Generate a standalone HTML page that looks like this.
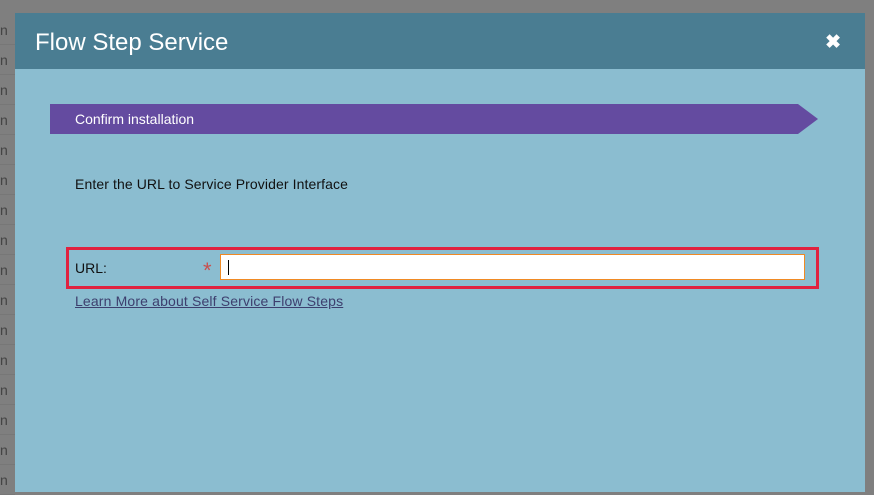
<!DOCTYPE html>
<html><head><meta charset="utf-8"><style>
*{margin:0;padding:0;box-sizing:border-box}
body{width:874px;height:492px;overflow:hidden;background:#7f7f7f;font-family:"Liberation Sans",sans-serif;position:relative}
.row{position:absolute;left:0;width:15px;height:30px;color:#444;font-size:14px;line-height:30px;border-bottom:1px solid #777}
.modal{position:absolute;left:15px;top:13px;width:850px;height:479px;background:#8bbdd0}
.hdr{height:56px;background:#4a7d92;color:#fff;font-size:24px;line-height:60px;padding-left:20px}
.x{position:absolute;right:24px;top:20px;color:#fff;font-size:19px;font-weight:bold;line-height:20px}
.ban{position:absolute;left:35px;top:91px;width:768px;height:30px;background:#644ba0;color:#fff;font-size:14px;line-height:31px;padding-left:25px;clip-path:polygon(0 0,748px 0,768px 15px,748px 30px,0 30px)}
.t{position:absolute;left:60px;top:163px;font-size:14px;color:#111;letter-spacing:0.1px}
.box{position:absolute;left:51px;top:234px;width:753px;height:42px;border:3px solid #e0223f}
.lab{position:absolute;left:60px;top:247px;font-size:14px;color:#111}
.ast{position:absolute;left:188px;top:245px;font-size:22px;color:#c8504e}
.inp{position:absolute;left:205px;top:241px;width:585px;height:26px;background:#fff;border:1px solid #f08a24}
.cur{position:absolute;left:7px;top:5px;width:1px;height:15px;background:#000}
.lnk{position:absolute;left:60px;top:280px;font-size:14px;color:#3d3f6e;text-decoration:underline;letter-spacing:0.15px}
</style></head><body>
<div class="row" style="top:15px">n</div><div class="row" style="top:45px">n</div><div class="row" style="top:75px">n</div>
<div class="row" style="top:105px">n</div><div class="row" style="top:135px">n</div><div class="row" style="top:165px">n</div>
<div class="row" style="top:195px">n</div><div class="row" style="top:225px">n</div><div class="row" style="top:255px">n</div>
<div class="row" style="top:285px">n</div><div class="row" style="top:315px">n</div><div class="row" style="top:345px">n</div>
<div class="row" style="top:375px">n</div><div class="row" style="top:405px">n</div><div class="row" style="top:435px">n</div><div class="row" style="top:465px">n</div>
<div class="modal">
<div class="hdr">Flow Step Service</div><div class="x">✖</div>
<div class="ban">Confirm installation</div>
<div class="t">Enter the URL to Service Provider Interface</div>
<div class="box"></div>
<div class="lab">URL:</div><div class="ast">*</div>
<div class="inp"><div class="cur"></div></div>
<div class="lnk">Learn More about Self Service Flow Steps</div>
</div>
</body></html>
